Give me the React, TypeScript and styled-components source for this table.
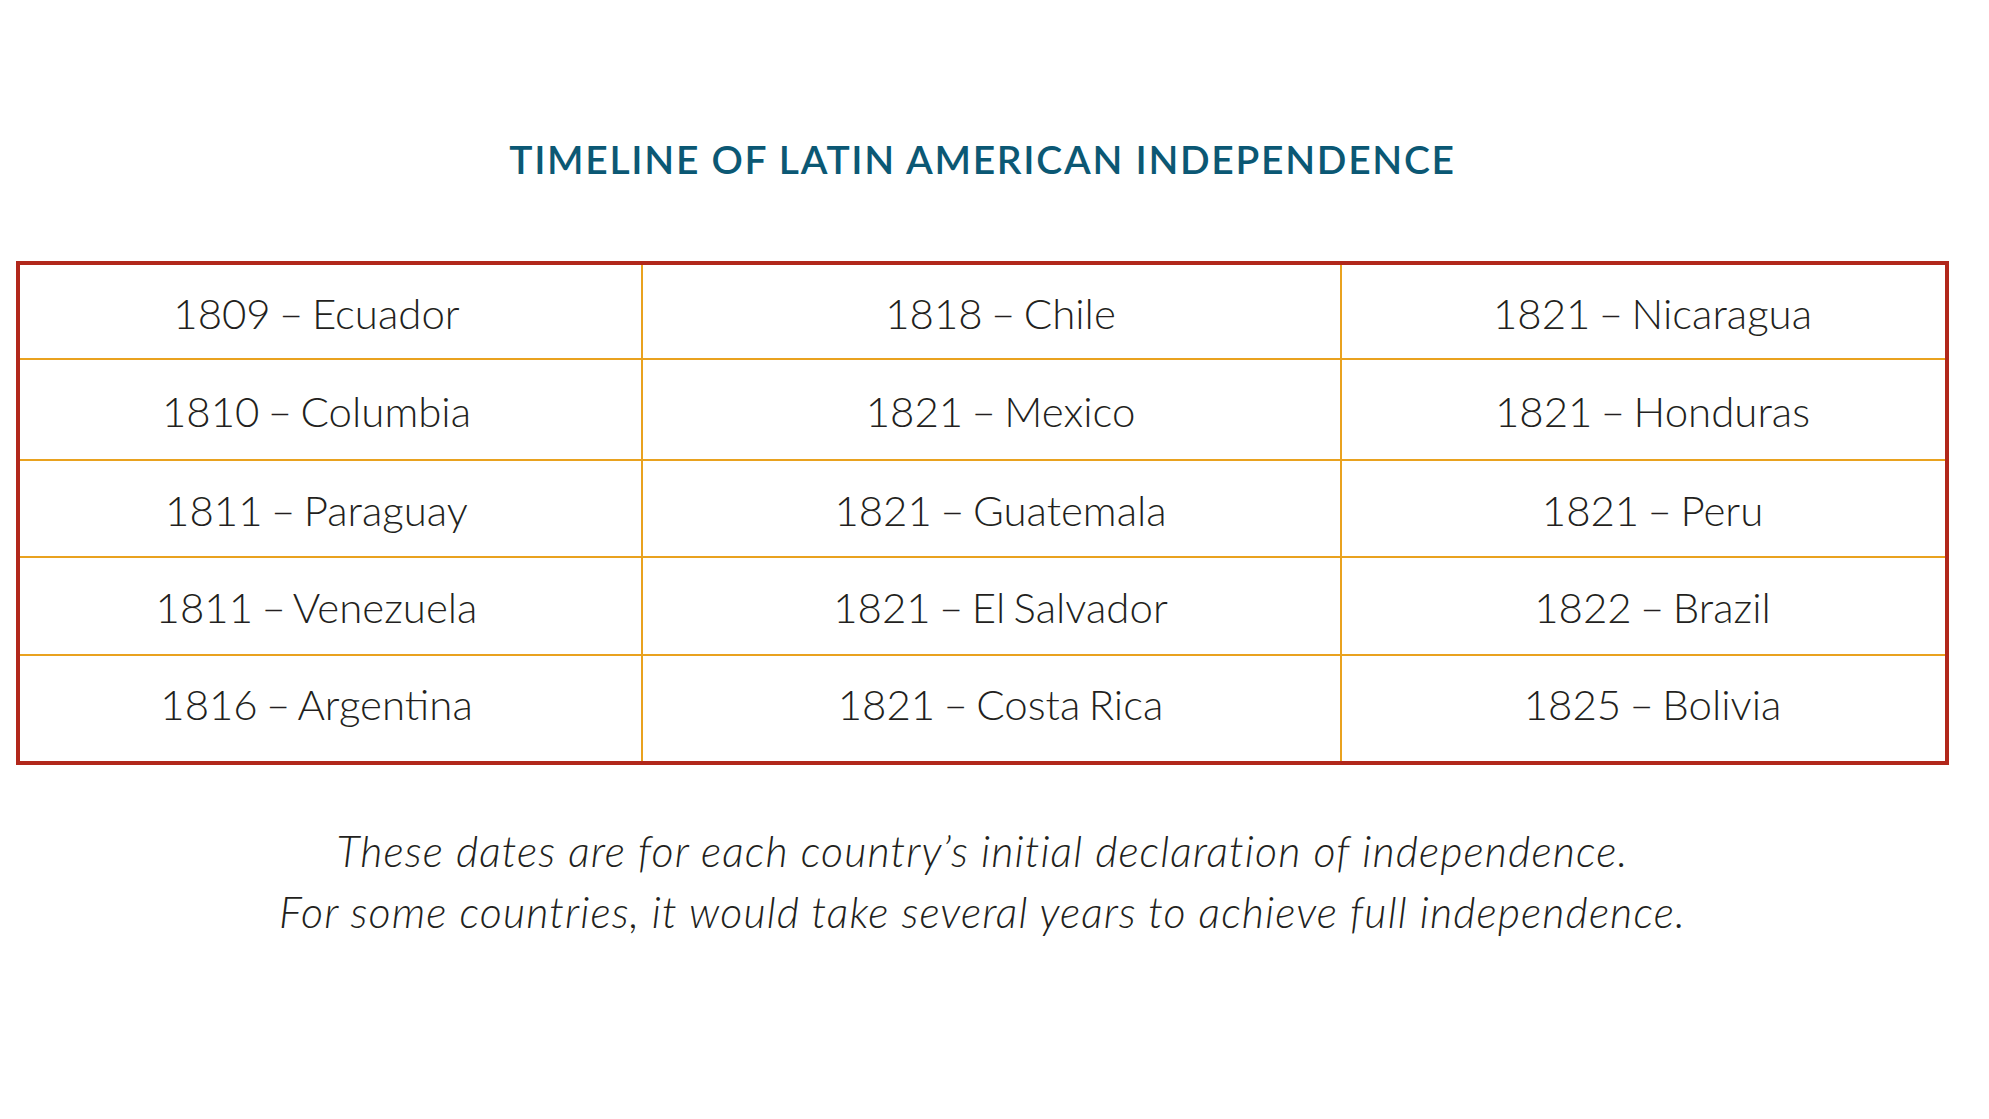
import React from "react";
import styled, { createGlobalStyle } from "styled-components";

const GlobalStyle = createGlobalStyle`
  html, body {
    margin: 0;
    padding: 0;
    background: #ffffff;
  }
  body {
    font-family: Lato, "Open Sans", "Liberation Sans", sans-serif;
    color: #231f20;
  }
`;

const Page = styled.div`
  width: 1933px;
  margin-left: 16px;
  padding-top: 135px;
  display: flex;
  flex-direction: column;
  align-items: stretch;
`;

const Title = styled.h1`
  margin: 0;
  font-size: 39px;
  line-height: 48px;
  font-weight: 600;
  color: #0b5874;
  text-align: center;
  letter-spacing: 1.7px;
`;

const Table = styled.div`
  margin-top: 78px;
  display: grid;
  grid-template-columns: 623px 699px 1fr;
  grid-template-rows: 95px 101px 97px 98px 105px;
  border: 4px solid #b1271b;
  background: #ffffff;
`;

// columns sit a little off-centre in the original artwork
const shifts = [-28, 18, 18];

const Cell = styled.div<{ $lastCol: boolean; $lastRow: boolean; $shift: number }>`
  display: flex;
  align-items: center;
  justify-content: center;
  font-size: 42px;
  font-weight: 300;
  word-spacing: -3px;
  color: #231f20;
  padding-top: ${(p) => (p.$lastRow ? 0 : 2)}px;
  padding-bottom: ${(p) => (p.$lastRow ? 10 : 0)}px;
  padding-left: ${(p) => (p.$shift > 0 ? p.$shift : 0)}px;
  padding-right: ${(p) => (p.$shift < 0 ? -p.$shift : 0)}px;
  box-sizing: border-box;
  border-right: ${(p) => (p.$lastCol ? "none" : "2px solid #e9a21f")};
  border-bottom: ${(p) => (p.$lastRow ? "none" : "2px solid #e9a21f")};
`;

const Note = styled.p`
  margin: 55px 0 0;
  font-size: 43px;
  line-height: 61px;
  font-style: italic;
  font-weight: 300;
  letter-spacing: 1.1px;
  text-align: center;
  color: #231f20;
`;

const rows: string[][] = [
  ["1809 – Ecuador", "1818 – Chile", "1821 – Nicaragua"],
  ["1810 – Columbia", "1821 – Mexico", "1821 – Honduras"],
  ["1811 – Paraguay", "1821 – Guatemala", "1821 – Peru"],
  ["1811 – Venezuela", "1821 – El Salvador", "1822 – Brazil"],
  ["1816 – Argentina", "1821 – Costa Rica", "1825 – Bolivia"],
];

export default function App() {
  return (
    <>
      <GlobalStyle />
      <Page>
        <Title>TIMELINE OF LATIN AMERICAN INDEPENDENCE</Title>
        <Table>
          {rows.map((row, r) =>
            row.map((text, c) => (
              <Cell
                key={`${r}-${c}`}
                $shift={shifts[c]}
                $lastCol={c === row.length - 1}
                $lastRow={r === rows.length - 1}
              >
                {text}
              </Cell>
            ))
          )}
        </Table>
        <Note>
          These dates are for each country’s initial declaration of independence.
          <br />
          For some countries, it would take several years to achieve full independence.
        </Note>
      </Page>
    </>
  );
}
